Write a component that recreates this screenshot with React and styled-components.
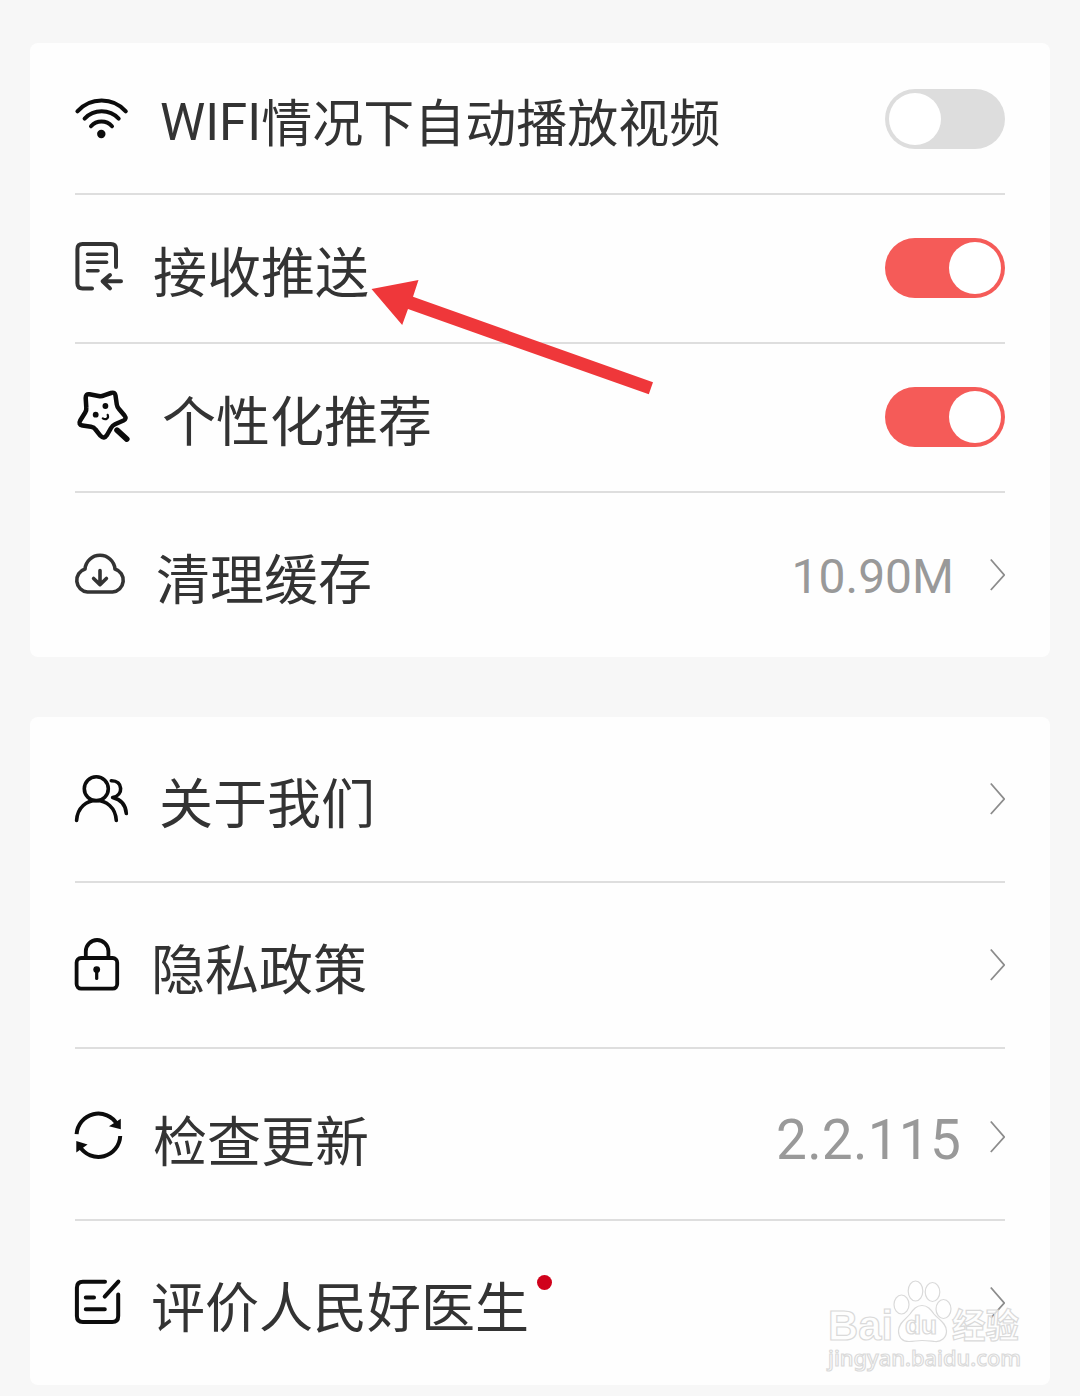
import React from "react";
import styled, { createGlobalStyle } from "styled-components";

const GlobalStyle = createGlobalStyle`
  * {
    box-sizing: border-box;
  }
  body {
    margin: 0;
    background-color: #f7f7f7;
  }
`;

const Page = styled.main`
  position: relative;
  width: 1080px;
  height: 1396px;
  padding: 43px 30px 0;
  overflow: hidden;
  font-family: Roboto, "Noto Sans CJK SC", sans-serif;
`;
const Card = styled.section`
  padding: ${(props) => props.$top || 0}px 45px 0;
  margin-bottom: 60px;
  border-radius: 8px;
  background-color: #fefefe;
`;
const Row = styled.div`
  display: flex;
  align-items: center;
  height: ${(props) => props.$height}px;
  padding-top: ${(props) => props.$top || 0}px;
  padding-bottom: ${(props) => props.$bottom || 0}px;
  border-bottom: 2px solid #dedede;
  &:last-child {
    border-bottom: none;
  }
`;
const IconBox = styled.span`
  flex: none;
  width: ${(props) => props.$width}px;
  height: 56px;
  margin-right: 30px;
`;
const Icon = styled.svg`
  display: block;
  width: 56px;
  height: 56px;
  overflow: visible;
  fill: none;
  stroke: ${(props) => props.$color || "#0c0c0c"};
  stroke-width: ${(props) => props.$stroke || 3.6};
  stroke-linecap: round;
  stroke-linejoin: round;
  .solid {
    fill: ${(props) => props.$color || "#0c0c0c"};
    stroke: none;
  }
`;
const Label = styled.span`
  position: relative;
  padding-top: ${(props) => props.$drop || 14}px;
  color: #333333;
  font-size: ${(props) => props.$size || 54}px;
  line-height: 64px;
  white-space: nowrap;
`;
const Latin = styled.span`
  position: relative;
  top: -2px;
`;
const Dot = styled.i`
  position: absolute;
  top: 11px;
  right: -23px;
  width: 15px;
  height: 15px;
  border-radius: 50%;
  background-color: #d0021b;
`;
const Spacer = styled.span`
  flex: 1;
`;
const Value = styled.span`
  margin-right: ${(props) => props.$gap}px;
  padding-top: ${(props) => props.$drop || 0}px;
  color: #999999;
  font-size: ${(props) => props.$size}px;
  line-height: 60px;
  letter-spacing: ${(props) => props.$spacing || 0}px;
`;
const Switch = styled.button`
  display: flex;
  align-items: center;
  justify-content: ${(props) => (props.$on ? "flex-end" : "flex-start")};
  width: 120px;
  height: 60px;
  padding: 0 4px;
  border: none;
  border-radius: 30px;
  background-color: ${(props) => (props.$on ? "#f55b58" : "#dddddd")};
`;
const Knob = styled.span`
  width: 52px;
  height: 52px;
  border-radius: 50%;
  background-color: #ffffff;
`;
const Arrow = styled.svg`
  display: block;
  flex: none;
  width: 16px;
  height: 34px;
  fill: none;
  stroke: #8c8c8c;
  stroke-width: 1.8;
`;
const Pointer = styled.svg`
  position: absolute;
  left: 370px;
  top: 278px;
  width: 286px;
  height: 120px;
  fill: #ef373a;
`;
const Watermark = styled.svg`
  position: absolute;
  left: 820px;
  top: 1274px;
  width: 210px;
  height: 104px;
  fill: rgba(255, 255, 255, 0.7);
  stroke: #dadada;
  stroke-width: 1.2;
  font-family: "Liberation Sans", "Noto Sans CJK SC", sans-serif;
  font-weight: bold;
`;

const WifiIcon = () => (
  <Icon viewBox="0 0 56 56" $stroke={4}>
    <path d="M2.4 20.3A32.5 32.5 0 0 1 50.8 20.3M9.6 27.6A23.5 23.5 0 0 1 43.7 27.6M16 35.3A13.9 13.9 0 0 1 37 35.3" />
    <circle className="solid" cx="26.3" cy="43" r="4.2" />
  </Icon>
);
const PushIcon = () => (
  <Icon viewBox="0 0 56 56" $color="#333333" $stroke={4}>
    <path d="M41 27V9.2Q41 4 35.8 4H7.6Q2.4 4 2.4 9.2V43.2Q2.4 48.4 7.6 48.4H17" />
    <path d="M12.6 14.3H31.6M12.6 22.3H31.6M12.6 30.7H23" strokeWidth="3.6" />
    <path d="M46 41.3H28M35 35L27.6 41.3L35 48.4" />
  </Icon>
);
const StarIcon = () => (
  <Icon viewBox="0 0 56 56" $stroke={4.5}>
    <path d="M14.5 5.3L23.5 7Q26.5 7.6 29 6.4L36 4Q40 2.6 40.5 6.5L41.8 15.5Q42.2 18 44 20L49.5 26.5Q52 29.8 48.5 31.5L40 35.2Q37.5 36.3 36 39L32 46Q29 50.5 25.5 46.8L20.5 40.5Q19 38.2 16 37.7L7.5 36.6Q3 35.5 5.2 31.5L10.2 23.5Q11.6 21.2 11.3 18.5L10.7 9Q10.7 4.7 14.5 5.3Z" />
    <path d="M42 41.1L51.8 50.1" strokeWidth="5.6" />
    <circle className="solid" cx="30.4" cy="17" r="2.9" />
    <circle className="solid" cx="20.7" cy="25.7" r="2.9" />
    <path d="M27.8 29.3C31 31.5 34 29 32.7 25.8" strokeWidth="2.2" />
  </Icon>
);
const CloudIcon = () => (
  <Icon viewBox="0 0 56 56" $color="#333333" $stroke={3.6}>
    <path d="M12.5 45H37.5A11.8 11.8 0 0 0 40 22A15.06 15.06 0 0 0 10 22A11.8 11.8 0 0 0 12.5 45Z" />
    <path d="M25 23.5V37M18.6 31.5L25 37.6L31.4 31.5" />
  </Icon>
);
const UsersIcon = () => (
  <Icon viewBox="0 0 56 56">
    <circle cx="21.3" cy="17.7" r="12" />
    <path d="M1.6 49.5C3 22.8 39.8 22.8 41.3 49.5" />
    <path d="M36.3 9.7C48 9.5 49 24.5 37.6 26.5C46 28.5 50.8 34 51.3 42.5" />
  </Icon>
);
const LockIcon = () => (
  <Icon viewBox="0 0 56 56" $stroke={3.8}>
    <rect x="1.6" y="21" width="40.6" height="30.6" rx="4.5" />
    <path d="M10.8 20.5V14.3A11.3 11.3 0 0 1 33.4 14.3V20.5" />
    <circle className="solid" cx="21.7" cy="32.6" r="3.4" />
    <path d="M21.7 33V41.5" strokeWidth="3.2" />
  </Icon>
);
const RefreshIcon = () => (
  <Icon viewBox="0 0 56 56" $stroke={4}>
    <path d="M1.6 25.2A21.8 21.8 0 0 1 42.2 15.4M45.2 27A21.8 21.8 0 0 1 4.8 37.5" strokeLinecap="butt" />
    <path className="solid" d="M45.8 9.8V20.2L34 17.2ZM1.3 32V43.5L12.6 35.6Z" />
  </Icon>
);
const ReviewIcon = () => (
  <Icon viewBox="0 0 56 56" $stroke={4}>
    <path d="M30 6.8H7.9Q1.9 6.8 1.9 12.8V41Q1.9 47 7.9 47H37.2Q43.2 47 43.2 41V19.5" />
    <path d="M43.4 6.6L29.7 21.6M10.8 22.4H19M10.8 34.3H29.8" />
  </Icon>
);

const Chevron = () => (
  <Arrow viewBox="0 0 16 34">
    <path d="M1.8 1.5L15.2 17L1.8 32" />
  </Arrow>
);
const Toggle = ({ on }) => (
  <Switch type="button" role="switch" aria-checked={on} $on={on}>
    <Knob />
  </Switch>
);

function SettingRow(props) {
  const { icon, iconWidth, label, size, drop, dot, children, ...rest } = props;
  return (
    <Row {...rest}>
      <IconBox $width={iconWidth}>{icon}</IconBox>
      <Label $size={size} $drop={drop}>
        {label}
        {dot && <Dot />}
      </Label>
      <Spacer />
      {children}
    </Row>
  );
}

function App() {
  const wifiLabel = (
    <>
      <Latin>WIFI</Latin>情况下自动播放视频
    </>
  );
  return (
    <>
      <GlobalStyle />
      <Page>
        <Card $top={3}>
          <SettingRow $height={149} $bottom={1} icon={<WifiIcon />} iconWidth={55} label={wifiLabel} size={51} drop={11}>
            <Toggle on={false} />
          </SettingRow>
          <SettingRow $height={149} $bottom={1} icon={<PushIcon />} iconWidth={48} label="接收推送">
            <Toggle on />
          </SettingRow>
          <SettingRow $height={149} $bottom={1} icon={<StarIcon />} iconWidth={57} label="个性化推荐">
            <Toggle on />
          </SettingRow>
          <SettingRow $height={164} icon={<CloudIcon />} iconWidth={51} label="清理缓存">
            <Value $size={48} $gap={35} $drop={4}>10.90M</Value>
            <Chevron />
          </SettingRow>
        </Card>
        <Card>
          <SettingRow $height={166} icon={<UsersIcon />} iconWidth={54} label="关于我们">
            <Chevron />
          </SettingRow>
          <SettingRow $height={166} icon={<LockIcon />} iconWidth={46} label="隐私政策">
            <Chevron />
          </SettingRow>
          <SettingRow $height={172} $top={6} icon={<RefreshIcon />} iconWidth={48} label="检查更新">
            <Value $size={55} $gap={28} $spacing={0.2} $drop={6}>2.2.115</Value>
            <Chevron />
          </SettingRow>
          <SettingRow $height={164} icon={<ReviewIcon />} iconWidth={46} label="评价人民好医生" dot>
            <Chevron />
          </SettingRow>
        </Card>
        <Pointer viewBox="370 278 286 120">
          <path d="M371.5 289L418.5 280L413 296.8L653 382.3L648.8 394.3L408 309L402.2 325Z" />
        </Pointer>
        <Watermark viewBox="820 1274 210 104">
          <text x="828" y="1340" fontSize="43" textLength="65" lengthAdjust="spacingAndGlyphs">Bai</text>
          <ellipse cx="901.5" cy="1304.5" rx="7.5" ry="9.5" />
          <ellipse cx="915.5" cy="1291" rx="7.3" ry="10" />
          <ellipse cx="932.5" cy="1292" rx="7.3" ry="9.5" />
          <ellipse cx="943.5" cy="1309" rx="7.5" ry="9.5" />
          <path d="M922 1305.5C928 1305.5 931 1310 934 1314C938 1319 946.5 1323 946.5 1331C946.5 1338 941 1342 935 1341.5C930 1341 927 1340.5 922 1340.5C917 1340.5 914 1341.5 909 1341.5C902 1341.5 898.5 1337 898.5 1331C898.5 1323 906 1319 910 1314C913 1310 916 1305.5 922 1305.5Z" />
          <text x="905" y="1334" fontSize="25" textLength="32" lengthAdjust="spacingAndGlyphs">du</text>
          <text x="952" y="1338" fontSize="34" textLength="67" lengthAdjust="spacingAndGlyphs">经验</text>
          <text x="828" y="1366" fontSize="22" fontFamily="Noto Sans" fontWeight="500" textLength="193" lengthAdjust="spacingAndGlyphs">jingyan.baidu.com</text>
        </Watermark>
      </Page>
    </>
  );
}

export default App;
